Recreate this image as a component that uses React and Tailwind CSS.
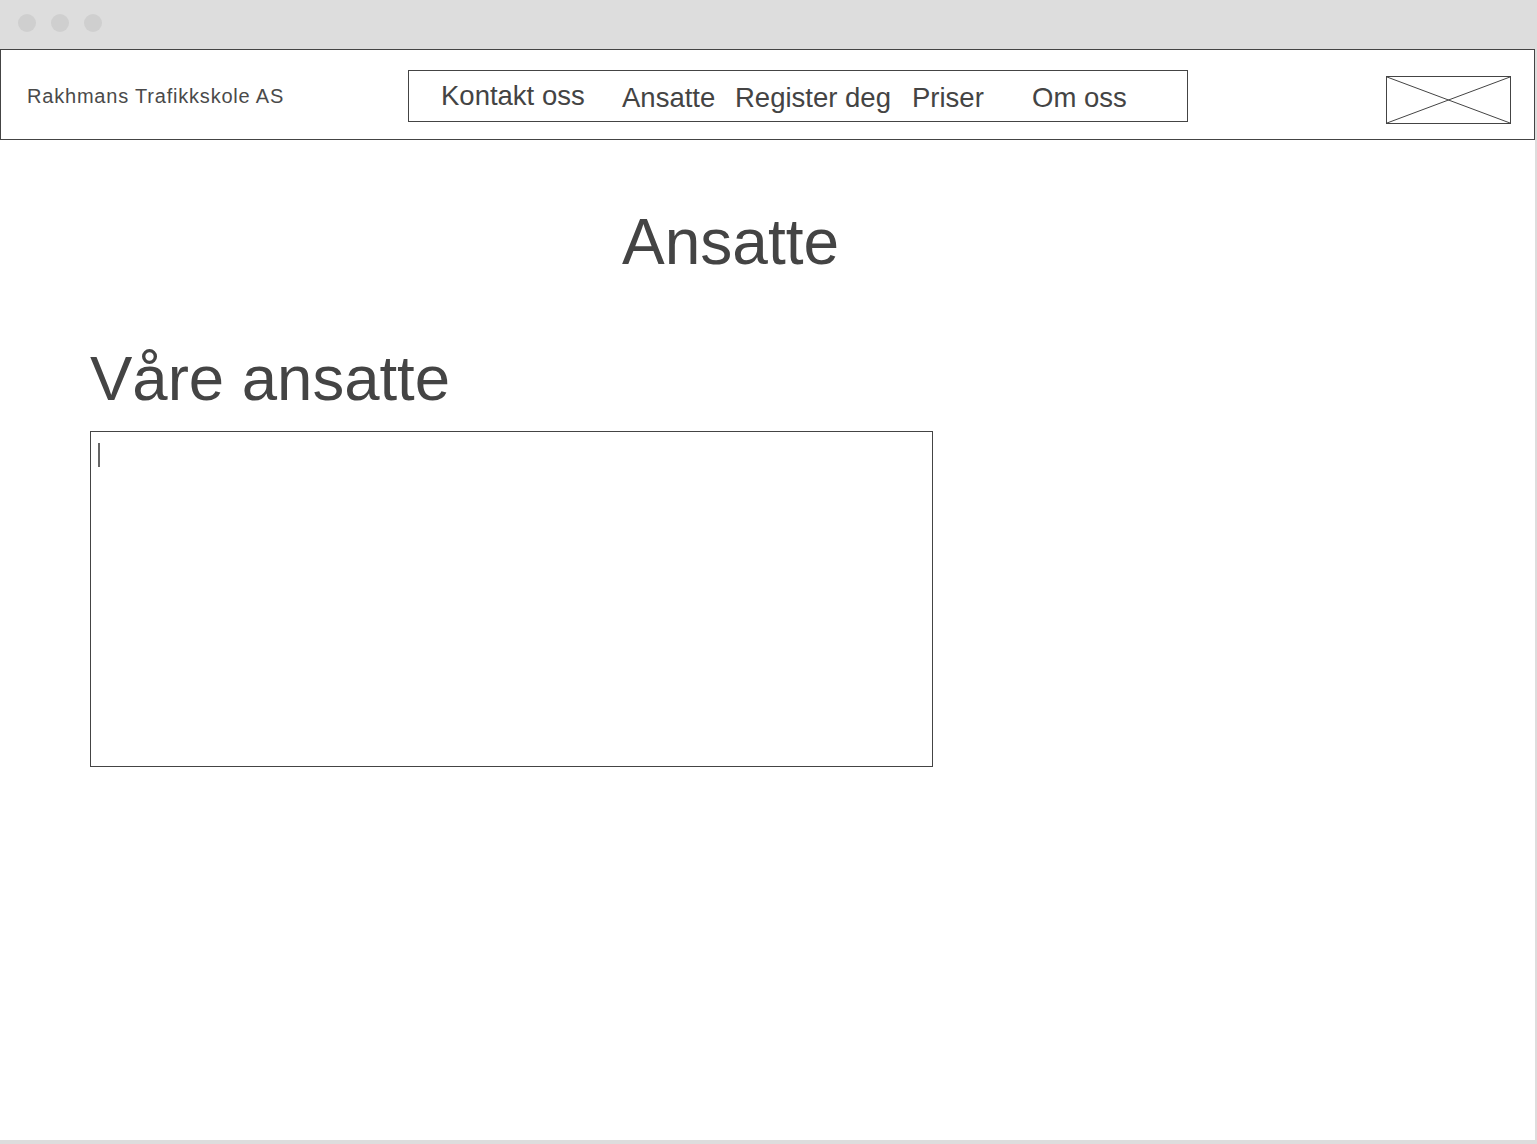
import React from "react";

const navItems = [
  { label: "Kontakt oss", w: "w-[181px]", lift: "mb-[4px]" },
  { label: "Ansatte", w: "w-[113px]", lift: "" },
  { label: "Register deg", w: "w-[177px]", lift: "" },
  { label: "Priser", w: "w-[120px]", lift: "" },
  { label: "Om oss", w: "w-[120px]", lift: "" },
];

function ImagePlaceholder() {
  return (
    <div className="mt-[26px] ml-[198px] w-[125px] h-[48px] border border-[#444]">
      <svg width="123" height="46" viewBox="0 0 123 46" className="block">
        <line x1="0" y1="0" x2="123" y2="46" stroke="#444" strokeWidth="1" />
        <line x1="0" y1="46" x2="123" y2="0" stroke="#444" strokeWidth="1" />
      </svg>
    </div>
  );
}

export default function App() {
  return (
    <div className="w-[1537px] h-[1144px] bg-[#dddddd] flex flex-col font-['Liberation_Sans',Arial,sans-serif] text-[#444]">
      {/* window chrome */}
      <div className="h-[49px] flex items-center gap-[15px] pl-[18px] pb-[3px]">
        <span className="w-[18px] h-[18px] rounded-full bg-[#cfcfcf]" />
        <span className="w-[18px] h-[18px] rounded-full bg-[#cfcfcf]" />
        <span className="w-[18px] h-[18px] rounded-full bg-[#cfcfcf]" />
      </div>

      <div className="w-[1535px] h-[1091px] bg-white">
        {/* header */}
        <header className="h-[91px] border border-[#444] flex items-start">
          <div className="w-[407px] pl-[26px] mt-[36px] text-[20px] leading-[20px] tracking-[0.8px] text-[#4a4a4a] whitespace-nowrap">
            Rakhmans Trafikkskole AS
          </div>
          <nav className="mt-[20px] w-[780px] h-[52px] border border-[#444] flex items-center pl-[32px] pt-[4px] text-[27.5px] leading-[30px] text-[#444]">
            {navItems.map((item) => (
              <span key={item.label} className={`${item.w} ${item.lift} whitespace-nowrap`}>
                {item.label}
              </span>
            ))}
          </nav>
          <ImagePlaceholder />
        </header>

        {/* content */}
        <main className="pt-[71px]">
          <h1 className="ml-[622px] text-[64px] leading-[63px] font-normal text-[#444]">Ansatte</h1>
          <h2 className="mt-[73px] ml-[90px] text-[63.5px] leading-[63px] font-normal text-[#444]">Våre ansatte</h2>
          <div className="mt-[21px] ml-[90px] w-[843px] h-[336px] border border-[#444] pt-[11px] pl-[7px]">
            <div className="w-[2px] h-[24px] bg-[#666]" />
          </div>
        </main>
      </div>
    </div>
  );
}
